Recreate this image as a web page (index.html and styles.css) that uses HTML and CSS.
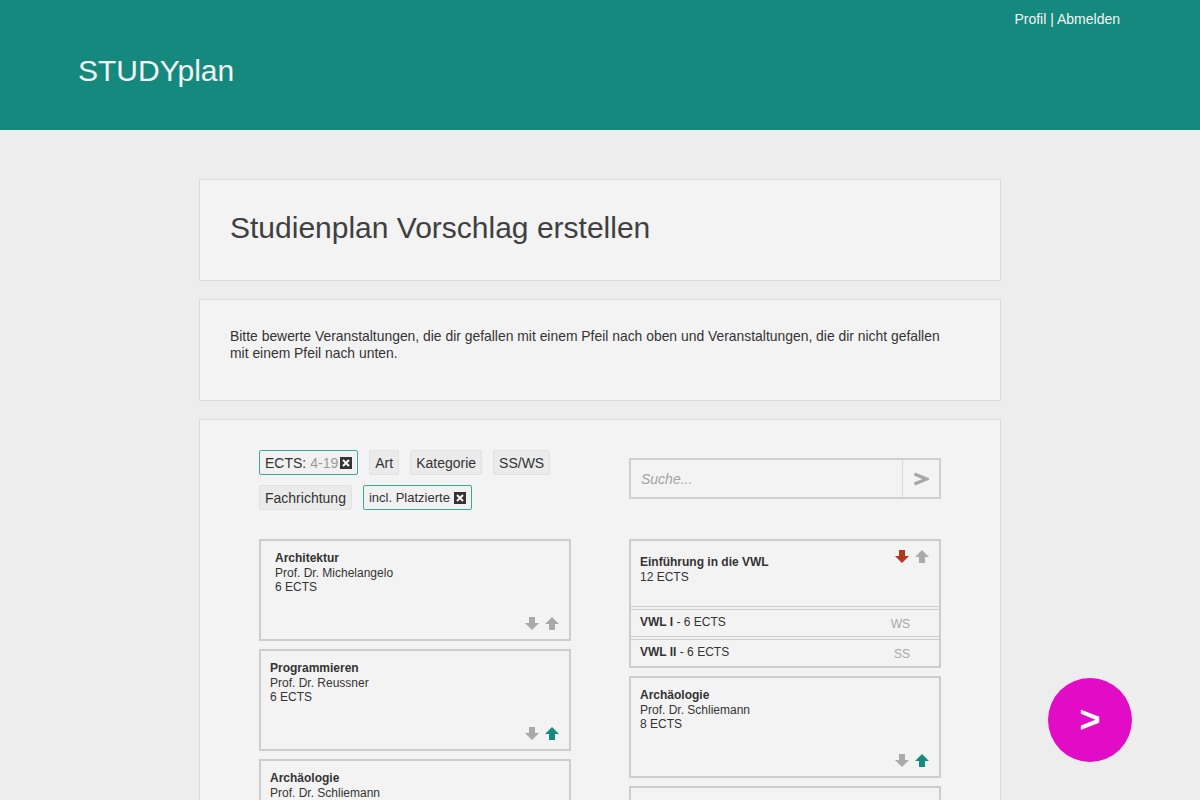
FILE: index.html
```html
<!DOCTYPE html>
<html lang="de">
<head>
<meta charset="utf-8">
<title>STUDYplan</title>
<link rel="stylesheet" href="styles.css">
</head>
<body>
<header class="topbar">
  <div class="topnav"><a href="#">Profil</a> | <a href="#">Abmelden</a></div>
  <div class="logo">STUDYplan</div>
</header>
<main class="container">
  <section class="panel panel-title">
    <h1>Studienplan Vorschlag erstellen</h1>
  </section>
  <section class="panel panel-info">
    <p>Bitte bewerte Veranstaltungen, die dir gefallen mit einem Pfeil nach oben und Veranstaltungen, die dir nicht gefallen mit einem Pfeil nach unten.</p>
  </section>
  <section class="panel panel-main">
    <div class="grid">
      <div class="filters">
        <div class="chip-row">
          <span class="chip chip-active">ECTS: <span class="muted">4-19</span><svg class="xbox" width="12" height="12" viewBox="0 0 12 12"><rect width="12" height="12" fill="#333"/><path d="M3 3l6 6M9 3l-6 6" stroke="#fff" stroke-width="2"/></svg></span>
          <span class="chip">Art</span>
          <span class="chip">Kategorie</span>
          <span class="chip">SS/WS</span>
        </div>
        <div class="chip-row">
          <span class="chip">Fachrichtung</span>
          <span class="chip chip-active chip-small">incl. Platzierte <svg class="xbox" width="12" height="12" viewBox="0 0 12 12"><rect width="12" height="12" fill="#333"/><path d="M3 3l6 6M9 3l-6 6" stroke="#fff" stroke-width="2"/></svg></span>
        </div>
      </div>
      <div class="search">
        <span class="search-input">Suche...</span>
        <span class="search-btn"><svg width="16" height="14" viewBox="0 0 16 14"><path d="M1.5 2l12 5-12 5" fill="none" stroke="#a8a8a8" stroke-width="3.2" stroke-linejoin="miter"/></svg></span>
      </div>

      <div class="list">
        <div class="course course-wide">
          <div class="c-title">Architektur</div>
          <div>Prof. Dr. Michelangelo</div>
          <div>6 ECTS</div>
          <div class="votes">
            <svg class="arrow" width="14" height="13" viewBox="0 0 14 13"><path d="M4 0h6v6h4l-7 7-7-7h4z" fill="#aaa"/></svg>
            <svg class="arrow" width="14" height="13" viewBox="0 0 14 13"><path d="M7 0l7 7h-4v6H4V7H0z" fill="#aaa"/></svg>
          </div>
        </div>
        <div class="course">
          <div class="c-title">Programmieren</div>
          <div>Prof. Dr. Reussner</div>
          <div>6 ECTS</div>
          <div class="votes">
            <svg class="arrow" width="14" height="13" viewBox="0 0 14 13"><path d="M4 0h6v6h4l-7 7-7-7h4z" fill="#aaa"/></svg>
            <svg class="arrow" width="14" height="13" viewBox="0 0 14 13"><path d="M7 0l7 7h-4v6H4V7H0z" fill="#158a7e"/></svg>
          </div>
        </div>
        <div class="course">
          <div class="c-title">Archäologie</div>
          <div>Prof. Dr. Schliemann</div>
          <div>8 ECTS</div>
          <div class="votes">
            <svg class="arrow" width="14" height="13" viewBox="0 0 14 13"><path d="M4 0h6v6h4l-7 7-7-7h4z" fill="#aaa"/></svg>
            <svg class="arrow" width="14" height="13" viewBox="0 0 14 13"><path d="M7 0l7 7h-4v6H4V7H0z" fill="#aaa"/></svg>
          </div>
        </div>
      </div>

      <div class="list">
        <div class="group">
          <div class="group-head">
            <div class="group-text">
              <div class="c-title">Einführung in die VWL</div>
              <div>12 ECTS</div>
            </div>
            <div class="votes-top">
              <svg class="arrow" width="14" height="13" viewBox="0 0 14 13"><path d="M4 0h6v6h4l-7 7-7-7h4z" fill="#b03a20"/></svg>
              <svg class="arrow" width="14" height="13" viewBox="0 0 14 13"><path d="M7 0l7 7h-4v6H4V7H0z" fill="#aaa"/></svg>
            </div>
          </div>
          <div class="sub"><span><b>VWL I</b> - 6 ECTS</span><span class="sem">WS</span></div>
          <div class="sub"><span><b>VWL II</b> - 6 ECTS</span><span class="sem">SS</span></div>
        </div>
        <div class="course">
          <div class="c-title">Archäologie</div>
          <div>Prof. Dr. Schliemann</div>
          <div>8 ECTS</div>
          <div class="votes">
            <svg class="arrow" width="14" height="13" viewBox="0 0 14 13"><path d="M4 0h6v6h4l-7 7-7-7h4z" fill="#aaa"/></svg>
            <svg class="arrow" width="14" height="13" viewBox="0 0 14 13"><path d="M7 0l7 7h-4v6H4V7H0z" fill="#158a7e"/></svg>
          </div>
        </div>
        <div class="course course-empty"></div>
      </div>
    </div>
  </section>
</main>
<a class="fab" href="#">&gt;</a>
</body>
</html>
```

FILE: styles.css
```css
html, body {
  margin: 0;
  padding: 0;
}
body {
  background: #eeeded;
  font-family: "Liberation Sans", Arial, sans-serif;
  color: #333;
  height: 800px;
  overflow: hidden;
}
.topbar {
  background: #15897e;
  height: 130px;
  box-sizing: border-box;
  padding: 10px 80px 0 78px;
  color: #f4f4f4;
}
.topnav {
  text-align: right;
  font-size: 14px;
  line-height: 18px;
}
.topnav a {
  color: #f4f4f4;
  text-decoration: none;
}
.logo {
  margin-top: 25px;
  font-size: 30px;
  line-height: 36px;
}
.container {
  width: 802px;
  margin: 49px auto 0;
}
.panel {
  background: #f3f3f3;
  border: 1px solid #dcdcdc;
  margin-bottom: 18px;
}
.panel-title {
  padding: 32px 30px 36px;
}
.panel-title h1 {
  margin: 0;
  font-weight: normal;
  font-size: 30px;
  line-height: 32px;
  color: #404040;
}
.panel-info {
  padding: 28px 30px 38px;
}
.panel-info p {
  margin: 0;
  max-width: 725px;
  font-size: 13.9px;
  line-height: 17px;
  color: #333;
}
.panel-main {
  padding: 30px 59px 0;
  height: 600px;
}
.grid {
  display: grid;
  grid-template-columns: 312px 312px;
  column-gap: 58px;
  row-gap: 29px;
}
.filters {
  display: flex;
  flex-direction: column;
  gap: 10px;
}
.chip-row {
  display: flex;
  gap: 11px;
}
.chip {
  display: inline-flex;
  align-items: center;
  white-space: nowrap;
  height: 25px;
  box-sizing: border-box;
  padding: 0 5px;
  border: 1px solid #e2e2e2;
  border-radius: 2px;
  background: #ebebeb;
  font-size: 14px;
  color: #333;
}
.chip.chip-active {
  border-color: #3ea898;
  background: #f1f1f1;
}
.chip-small {
  font-size: 13px;
}
.muted {
  color: #9a9a9a;
  margin-left: 4px;
}
.xbox {
  margin-left: 2px;
}
.chip-small .xbox {
  margin-left: 4px;
}
.search {
  margin-top: 8px;
  display: flex;
  height: 41px;
  box-sizing: border-box;
  border: 2px solid #cfcfcf;
  background: #f3f3f3;
}
.search-input {
  flex: 1;
  padding-left: 10px;
  display: flex;
  align-items: center;
  font-style: italic;
  font-size: 14px;
  color: #a4a4a4;
  border-right: 1px solid #dadada;
}
.search-btn {
  width: 36px;
  display: flex;
  align-items: center;
  justify-content: center;
}
.search-btn svg {
  display: block;
}
.list {
  display: flex;
  flex-direction: column;
  gap: 8px;
}
.course {
  height: 102px;
  box-sizing: border-box;
  border: 2px solid #cdcdcd;
  background: #f3f3f3;
  padding: 10px 10px 9px 9px;
  display: flex;
  flex-direction: column;
  font-size: 12px;
  line-height: 14.5px;
  color: #333;
}
.course-wide {
  padding-left: 14px;
}
.c-title {
  font-weight: bold;
}
.votes {
  margin-top: auto;
  display: flex;
  justify-content: flex-end;
  gap: 6px;
}
.arrow {
  display: block;
}
.group {
  border: 2px solid #cdcdcd;
  background: #f3f3f3;
  font-size: 12px;
  line-height: 14.5px;
  color: #333;
}
.group-head {
  height: 65px;
  box-sizing: border-box;
  padding: 9px 10px 9px 9px;
  display: flex;
  justify-content: space-between;
}
.group-text {
  margin-top: 5px;
}
.votes-top {
  display: flex;
  gap: 6px;
  height: 13px;
}
.sub {
  border-top: 4px double #cdcdcd;
  height: 26px;
  box-sizing: content-box;
  padding: 0 29px 0 9px;
  display: flex;
  justify-content: space-between;
  align-items: center;
}
.sub span:first-child {
  margin-top: -2px;
}
.sem {
  color: #a8a8a8;
  margin-top: 2px;
}
.fab {
  position: fixed;
  left: 1048px;
  top: 678px;
  width: 84px;
  height: 84px;
  border-radius: 50%;
  background: #e20bc6;
  color: #fff;
  display: flex;
  align-items: center;
  justify-content: center;
  font-size: 36px;
  font-weight: bold;
  text-decoration: none;
}
```
